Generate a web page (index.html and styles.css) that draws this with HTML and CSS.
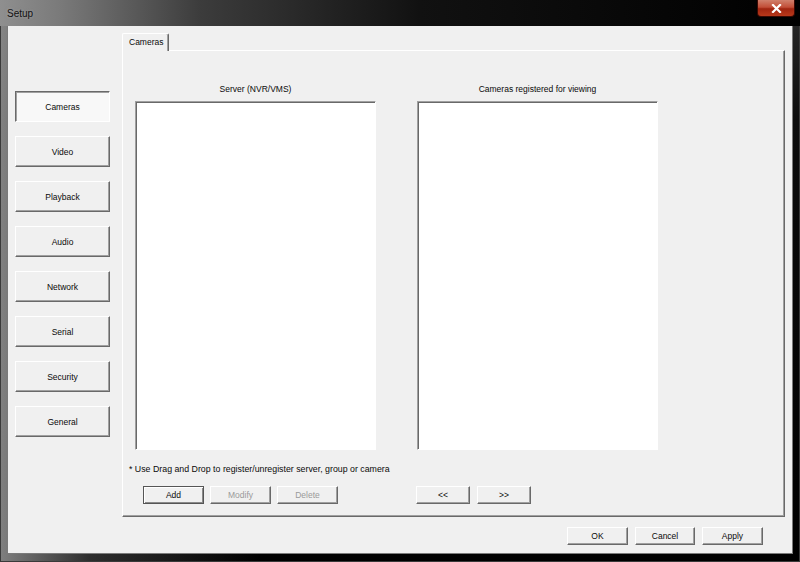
FILE: index.html
```html
<!DOCTYPE html>
<html lang="en">
<head>
  <meta charset="UTF-8" />
  <title>Setup</title>
  <link rel="stylesheet" href="styles.css">
</head>
<body>
  <div class="window">
    <div class="titlebar">
      <span class="title">Setup</span>
      <div class="close-btn">
        <svg width="11" height="9" viewBox="0 0 11 9">
          <path d="M2 1 L9 8 M9 1 L2 8" stroke="#fff" stroke-width="2.2" stroke-linecap="square"/>
        </svg>
      </div>
    </div>

    <div class="client">
      <div class="main-row">
        <!-- left category buttons -->
        <div class="sidebar">
          <div class="nav-btn selected">Cameras</div>
          <div class="nav-btn">Video</div>
          <div class="nav-btn">Playback</div>
          <div class="nav-btn">Audio</div>
          <div class="nav-btn">Network</div>
          <div class="nav-btn">Serial</div>
          <div class="nav-btn">Security</div>
          <div class="nav-btn">General</div>
        </div>

        <div class="tab-area">
          <div class="tab-strip">
            <div class="tab">Cameras</div>
          </div>
          <div class="tab-panel">
            <div class="lists">
              <div class="list-label">Server (NVR/VMS)</div>
              <div class="list-label">Cameras registered for viewing</div>
              <div class="listbox"></div>
              <div class="listbox"></div>
              <div class="note">* Use Drag and Drop to register/unregister server, group or camera</div>
              <div class="btn-row left">
                <div class="btn default">Add</div>
                <div class="btn disabled">Modify</div>
                <div class="btn disabled">Delete</div>
              </div>
              <div class="btn-row right">
                <div class="btn small">&lt;&lt;</div>
                <div class="btn small">&gt;&gt;</div>
              </div>
            </div>
          </div>
        </div>
      </div>

      <div class="footer">
        <div class="btn">OK</div>
        <div class="btn cancel">Cancel</div>
        <div class="btn">Apply</div>
      </div>
    </div>
  </div>
</body>
</html>
```

FILE: styles.css
```css
html, body {
  margin: 0;
  padding: 0;
  background: #000;
  font-family: 'Liberation Sans', Arial, sans-serif;
  font-size: 8.5px;
  color: #0a0a0a;
}

.window {
  width: 800px;
  height: 562px;
  display: flex;
  flex-direction: column;
  background:
    linear-gradient(to right, rgba(150, 150, 150, 0.85) 0, rgba(90, 90, 90, 0.5) 90px, rgba(20, 20, 20, 0) 260px),
    linear-gradient(to bottom, #2c2c2c 0, #0c0c0c 120px, #000 100%);
  box-shadow: inset 0 0 0 1px #3a3a3a;
}

.titlebar {
  position: relative;
  height: 26px;
  flex: none;
  background: linear-gradient(to right, #8f8f8f 0, #7a7a7a 60px, #3c3c3c 200px, #111 420px, #000 100%);
}

.title {
  position: absolute;
  left: 7px;
  top: 8px;
  font-size: 10px;
  color: #111;
  text-shadow: 0 0 3px rgba(200, 200, 200, 0.5);
}

.close-btn {
  position: absolute;
  top: 0;
  right: 5px;
  width: 38px;
  height: 17px;
  box-sizing: border-box;
  border: 1px solid #3a0a04;
  border-top: none;
  border-radius: 0 0 4px 4px;
  background: linear-gradient(to bottom, #d0806c 0, #c24e37 45%, #a02510 55%, #b8391b 100%);
  display: flex;
  align-items: center;
  justify-content: center;
}

.client {
  flex: 1;
  margin: 0 8px 9px 8px;
  background: #f0f0f0;
  display: flex;
  flex-direction: column;
  box-shadow: 0 0 0 1px #7a7a7a;
}

.main-row {
  display: flex;
  height: 491px;
}

.sidebar {
  width: 114px;
  box-sizing: border-box;
  padding: 65px 0 0 7px;
  display: flex;
  flex-direction: column;
  gap: 14px;
}

.nav-btn {
  width: 95px;
  height: 31px;
  box-sizing: border-box;
  display: flex;
  align-items: center;
  justify-content: center;
  border: 1px solid;
  border-color: #fff #696969 #696969 #fff;
  box-shadow: inset -1px -1px #a0a0a0;
  background: #f0f0f0;
}

.nav-btn.selected {
  border-color: #696969 #fff #fff #696969;
  box-shadow: inset 1px 1px #a0a0a0;
  background: #f8f8f8;
}

.tab-area {
  flex: 1;
  margin-right: 7px;
  padding-top: 7px;
  display: flex;
  flex-direction: column;
}

.tab-strip {
  display: flex;
  height: 17px;
}

.tab {
  position: relative;
  z-index: 1;
  height: 18px;
  box-sizing: border-box;
  padding: 3px 5px 0 6px;
  border-left: 1px solid #fff;
  border-top: 1px solid #fff;
  border-right: 1px solid #696969;
  box-shadow: inset -1px 0 #a0a0a0;
  background: #f0f0f0;
  border-radius: 2px 2px 0 0;
}

.tab-panel {
  flex: 1;
  box-sizing: border-box;
  border: 1px solid;
  border-color: #fff #696969 #696969 #fff;
  box-shadow: inset -1px -1px #a0a0a0;
  padding: 32px 0 0 12px;
}

.lists {
  display: grid;
  grid-template-columns: 241px 241px;
  column-gap: 41px;
}

.list-label {
  text-align: center;
  line-height: 12px;
  margin-bottom: 6px;
}

.listbox {
  height: 349px;
  box-sizing: border-box;
  background: #fff;
  border: 1px solid;
  border-color: #a0a0a0 #fff #fff #a0a0a0;
  box-shadow: inset 1px 1px #696969;
}

.note {
  grid-column: 1 / 3;
  margin: 13px 0 0 -6px;
  line-height: 12px;
  font-size: 8.8px;
}

.btn-row {
  display: flex;
  gap: 6px;
  margin-top: 11px;
}

.btn-row.left {
  padding-left: 8px;
}

.btn-row.right {
  margin-left: -1px;
  gap: 7px;
}

.btn {
  width: 61px;
  height: 18px;
  box-sizing: border-box;
  display: flex;
  align-items: center;
  justify-content: center;
  border: 1px solid;
  border-color: #fff #696969 #696969 #fff;
  box-shadow: inset -1px -1px #a0a0a0;
  background: #f0f0f0;
}

.btn.default {
  border-color: #555;
  box-shadow: inset 1px 1px #fff, inset -1px -1px #8a8a8a;
}

.btn.disabled {
  color: #9a9a9a;
}

.btn.small {
  width: 54px;
}

.footer {
  display: flex;
  justify-content: flex-end;
  gap: 7px;
  padding: 10px 29px 0 0;
}

.footer .cancel {
  width: 60px;
}
```
